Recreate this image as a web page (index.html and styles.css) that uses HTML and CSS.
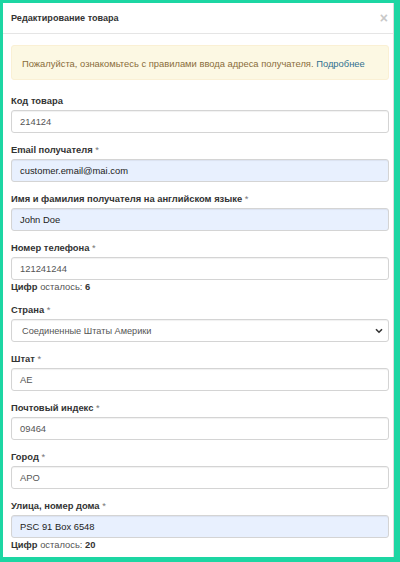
FILE: index.html
```html
<!doctype html>
<html lang="ru">
	<head>
		<meta charset="UTF-8">
		<title>Редактирование товара</title>
		<link rel="stylesheet" href="styles.css">
	</head>
	<body>
		<div class="modal">
			<div class="modal-header">
				<h4>Редактирование товара</h4>
				<span class="close">&times;</span>
			</div>
			<div class="modal-body">
				<div class="alert">Пожалуйста, ознакомьтесь с правилами ввода адреса получателя. <a>Подробнее</a></div>

				<div class="group">
					<label>Код товара</label>
					<div class="field">214124</div>
				</div>
				<div class="group">
					<label>Email получателя <i>*</i></label>
					<div class="field filled">customer.email@mai.com</div>
				</div>
				<div class="group">
					<label>Имя и фамилия получателя на английском языке <i>*</i></label>
					<div class="field filled">John Doe</div>
				</div>
				<div class="group">
					<label>Номер телефона <i>*</i></label>
					<div class="field">121241244</div>
					<div class="hint"><b>Цифр</b> осталось: <b>6</b></div>
				</div>
				<div class="group">
					<label>Страна <i>*</i></label>
					<div class="field select">
						<span>Соединенные Штаты Америки</span>
						<svg width="8" height="6" viewBox="0 0 8 6"><path d="M1 1.2l3 3 3-3" fill="none" stroke="#333" stroke-width="1.6"/></svg>
					</div>
				</div>
				<div class="group">
					<label>Штат <i>*</i></label>
					<div class="field">AE</div>
				</div>
				<div class="group">
					<label>Почтовый индекс <i>*</i></label>
					<div class="field">09464</div>
				</div>
				<div class="group">
					<label>Город <i>*</i></label>
					<div class="field">APO</div>
				</div>
				<div class="group">
					<label>Улица, номер дома <i>*</i></label>
					<div class="field filled">PSC 91 Box 6548</div>
					<div class="hint"><b>Цифр</b> осталось: <b>20</b></div>
				</div>
			</div>
		</div>
	</body>
</html>
```

FILE: styles.css
```css
*{ margin: 0; padding: 0; box-sizing: border-box;}
html, body{ height: 100%;}
body{
	background: #1dd6a3;
	font-family: "Liberation Sans", Arial, sans-serif;
	font-size: 9.4px;
	color: #333;
	padding: 3px 6px 5px 3px;
	overflow: hidden;
}
.modal{
	height: 100%;
	background: #fff;
	border-right: 1px solid #dcdcdc;
	overflow: hidden;
}
.modal-header{
	display: flex;
	align-items: center;
	justify-content: space-between;
	height: 31px;
	padding: 0 5px 0 8px;
	border-bottom: 1px solid #e5e5e5;
}
.modal-header h4{
	font-size: 9.1px;
	font-weight: bold;
	color: #333;
}
.modal-header .close{
	font-size: 14px;
	font-weight: bold;
	color: #c8c8c8;
	line-height: 1;
}
.modal-body{
	padding: 11px 4px 0 8px;
}
.alert{
	height: 35px;
	line-height: 35px;
	padding: 0 10px;
	margin-bottom: 14px;
	background: #fcf8e3;
	border: 1px solid #faf0d4;
	border-radius: 3px;
	color: #8a6d3b;
	white-space: nowrap;
}
.alert a{
	color: #31708f;
}
.group{
	margin-bottom: 10px;
}
.group label{
	display: block;
	line-height: 13px;
	margin-bottom: 3px;
	font-weight: bold;
	color: #333;
}
.group label i{
	font-style: normal;
	font-weight: normal;
	color: #777;
}
.field{
	display: flex;
	align-items: center;
	height: 23px;
	padding: 0 8px;
	border: 1px solid #d4d4d4;
	border-radius: 3px;
	box-shadow: inset 0 1px 1px rgba(0,0,0,.06);
	color: #555;
}
.field.filled{
	background: #e8f0fe;
	color: #222;
}
.field.select{
	justify-content: space-between;
	padding: 0 5px 0 10px;
	font-size: 9.2px;
}
.hint{
	line-height: 13px;
	color: #555;
}
.hint b{
	color: #333;
}
```
